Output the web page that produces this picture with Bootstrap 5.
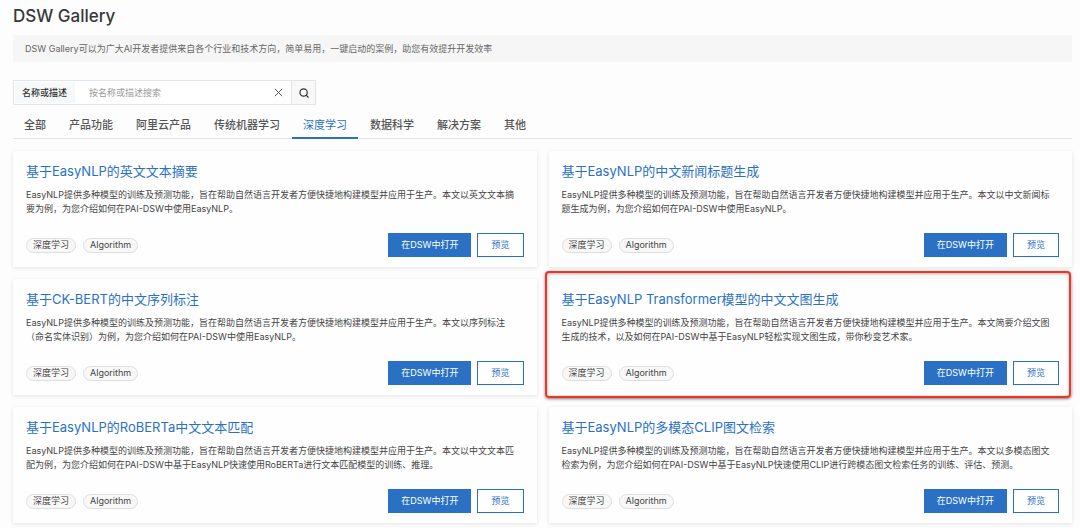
<!DOCTYPE html>
<html lang="zh-CN">
<head>
<meta charset="utf-8">
<meta name="viewport" content="width=device-width, initial-scale=1">
<title>DSW Gallery</title>
<link href="https://cdn.jsdelivr.net/npm/bootstrap@5.3.0/dist/css/bootstrap.min.css" rel="stylesheet">
<style>
  :root { --dsw-blue: #2a71c6; --dsw-line: #e3e4e6; }
  body { font-family: Inter, "Noto Sans CJK SC", sans-serif; font-size: 9px; line-height: 14px; color: #444; background: #fdfdfd; }
  .page { padding: 5px 8px 5px 13px; }
  .page-title { font-size: 17px; line-height: 22px; font-weight: 500; color: #383838; margin: 0 0 8px; }
  .intro { background: #f6f6f6; color: #666; padding: 7px 12px 6px; margin: 0 0 18px; }
  .search-box { width: 303px; height: 25px; border: 1px solid var(--dsw-line); background: #fff; }
  .search-box label { background: #f7f8fa; color: #333; font-weight: 500; padding: 0 8px 0 7px; margin: 1px; }
  .search-box input { font-size: 9px; line-height: 14px; padding: 0 13px; border: 0; background: transparent; border-radius: 0; min-height: 0; }
  .search-box input::placeholder { color: #999; }
  .search-box .tool { border: 0; background: transparent; padding: 0; width: 26px; color: #555; }
  .search-box .find { width: 24px; border-left: 1px solid var(--dsw-line); background: #f8f8f8; color: #333; }
  .topics { gap: 1px; margin: 5px 0 12px; border-bottom: 1px solid var(--dsw-line); }
  .topics .nav-link { font-size: 11px; line-height: 16px; font-weight: 500; color: #555; padding: 7px 11px 4px; border-bottom: 2px solid transparent; margin-bottom: -1px; }
  .topics .nav-link.active { color: var(--dsw-blue); font-weight: 400; border-color: var(--dsw-blue); }
  .gallery { --bs-gutter-x: 12px; --bs-gutter-y: 12px; }
  .case { border: 0; border-radius: 0; background: #fefefe; padding: 11px 13px 10px; box-shadow: 0 1px 4px rgba(0,0,0,.11); color: #444; }
  .case h2 { font-size: 13px; line-height: 18px; font-weight: 400; margin: 0 0 8px; }
  .case h2 a { color: var(--dsw-blue); text-decoration: none; }
  .case p { margin: 0 0 17px; padding-right: 8px; }
  .tags { gap: 7px; }
  .tag { border: 1px solid #dedede; background: #f8f8f8; border-radius: 8px; line-height: 12px; padding: 0 6px 1px; }
  .actions { gap: 6px; }
  .actions .btn { font-size: 9px; line-height: 14px; padding: 4px 13px; border-radius: 0; border-color: var(--dsw-blue); color: var(--dsw-blue); background: #fff; }
  .actions .open { background: var(--dsw-blue); color: #fff; padding: 4px 12px; }
  .picked::after { content: ""; position: absolute; top: -8px; right: 1px; bottom: -3px; left: -4px; border: 2px solid #ee3526; border-radius: 4px; box-shadow: 0 1px 3px rgba(0,0,0,.5), inset 0 1px 3px rgba(0,0,0,.3); pointer-events: none; }
</style>
</head>
<body>
<main class="page">
  <h1 class="page-title">DSW Gallery</h1>
  <p class="intro">DSW Gallery可以为广大AI开发者提供来自各个行业和技术方向，简单易用，一键启动的案例，助您有效提升开发效率</p>

  <form class="search-box d-flex align-items-stretch" role="search">
    <label for="q" class="d-flex align-items-center flex-shrink-0">名称或描述</label>
    <input id="q" class="form-control shadow-none" type="text" placeholder="按名称或描述搜索">
    <button type="button" class="tool flex-shrink-0 d-flex align-items-center justify-content-center" aria-label="清除">
      <svg width="9" height="9" viewBox="0 0 9 9" fill="none" stroke="currentColor"><path d="M.8.8l7.4 7.4M8.200.8L.8 8.200"/></svg>
    </button>
    <button type="submit" class="tool find flex-shrink-0 d-flex align-items-center justify-content-center" aria-label="搜索">
      <svg width="10" height="10" viewBox="0 0 10 10" fill="none" stroke="currentColor" stroke-width="1.200"><circle cx="4.600" cy="4.500" r="3.700"/><path d="M7.200 7.200L9.500 9.500"/></svg>
    </button>
  </form>

  <nav class="nav topics" aria-label="分类">
    <a class="nav-link" href="#">全部</a>
    <a class="nav-link" href="#">产品功能</a>
    <a class="nav-link" href="#">阿里云产品</a>
    <a class="nav-link" href="#">传统机器学习</a>
    <a class="nav-link active" aria-current="page" href="#">深度学习</a>
    <a class="nav-link" href="#">数据科学</a>
    <a class="nav-link" href="#">解决方案</a>
    <a class="nav-link" href="#">其他</a>
  </nav>

  <div class="row row-cols-2 gallery">
    <div class="col"><article class="card case h-100">
      <h2><a href="#">基于EasyNLP的英文文本摘要</a></h2>
      <p>EasyNLP提供多种模型的训练及预测功能，旨在帮助自然语言开发者方便快捷地构建模型并应用于生产。本文以英文文本摘要为例，为您介绍如何在PAI-DSW中使用EasyNLP。</p>
      <div class="d-flex justify-content-between align-items-center mt-auto">
        <div class="d-flex tags"><span class="tag">深度学习</span><span class="tag">Algorithm</span></div>
        <div class="d-flex actions"><button type="button" class="btn open">在DSW中打开</button><button type="button" class="btn">预览</button></div>
      </div>
    </article></div>
    <div class="col"><article class="card case h-100">
      <h2><a href="#">基于EasyNLP的中文新闻标题生成</a></h2>
      <p>EasyNLP提供多种模型的训练及预测功能，旨在帮助自然语言开发者方便快捷地构建模型并应用于生产。本文以中文新闻标题生成为例，为您介绍如何在PAI-DSW中使用EasyNLP。</p>
      <div class="d-flex justify-content-between align-items-center mt-auto">
        <div class="d-flex tags"><span class="tag">深度学习</span><span class="tag">Algorithm</span></div>
        <div class="d-flex actions"><button type="button" class="btn open">在DSW中打开</button><button type="button" class="btn">预览</button></div>
      </div>
    </article></div>
    <div class="col"><article class="card case h-100">
      <h2><a href="#">基于CK-BERT的中文序列标注</a></h2>
      <p>EasyNLP提供多种模型的训练及预测功能，旨在帮助自然语言开发者方便快捷地构建模型并应用于生产。本文以序列标注（命名实体识别）为例，为您介绍如何在PAI-DSW中使用EasyNLP。</p>
      <div class="d-flex justify-content-between align-items-center mt-auto">
        <div class="d-flex tags"><span class="tag">深度学习</span><span class="tag">Algorithm</span></div>
        <div class="d-flex actions"><button type="button" class="btn open">在DSW中打开</button><button type="button" class="btn">预览</button></div>
      </div>
    </article></div>
    <div class="col"><article class="card case picked h-100">
      <h2><a href="#">基于EasyNLP Transformer模型的中文文图生成</a></h2>
      <p>EasyNLP提供多种模型的训练及预测功能，旨在帮助自然语言开发者方便快捷地构建模型并应用于生产。本文简要介绍文图生成的技术，以及如何在PAI-DSW中基于EasyNLP轻松实现文图生成，带你秒变艺术家。</p>
      <div class="d-flex justify-content-between align-items-center mt-auto">
        <div class="d-flex tags"><span class="tag">深度学习</span><span class="tag">Algorithm</span></div>
        <div class="d-flex actions"><button type="button" class="btn open">在DSW中打开</button><button type="button" class="btn">预览</button></div>
      </div>
    </article></div>
    <div class="col"><article class="card case h-100">
      <h2><a href="#">基于EasyNLP的RoBERTa中文文本匹配</a></h2>
      <p>EasyNLP提供多种模型的训练及预测功能，旨在帮助自然语言开发者方便快捷地构建模型并应用于生产。本文以中文文本匹配为例，为您介绍如何在PAI-DSW中基于EasyNLP快速使用RoBERTa进行文本匹配模型的训练、推理。</p>
      <div class="d-flex justify-content-between align-items-center mt-auto">
        <div class="d-flex tags"><span class="tag">深度学习</span><span class="tag">Algorithm</span></div>
        <div class="d-flex actions"><button type="button" class="btn open">在DSW中打开</button><button type="button" class="btn">预览</button></div>
      </div>
    </article></div>
    <div class="col"><article class="card case h-100">
      <h2><a href="#">基于EasyNLP的多模态CLIP图文检索</a></h2>
      <p>EasyNLP提供多种模型的训练及预测功能，旨在帮助自然语言开发者方便快捷地构建模型并应用于生产。本文以多模态图文检索为例，为您介绍如何在PAI-DSW中基于EasyNLP快速使用CLIP进行跨模态图文检索任务的训练、评估、预测。</p>
      <div class="d-flex justify-content-between align-items-center mt-auto">
        <div class="d-flex tags"><span class="tag">深度学习</span><span class="tag">Algorithm</span></div>
        <div class="d-flex actions"><button type="button" class="btn open">在DSW中打开</button><button type="button" class="btn">预览</button></div>
      </div>
    </article></div>
  </div>
</main>
<script src="https://cdn.jsdelivr.net/npm/bootstrap@5.3.0/dist/js/bootstrap.bundle.min.js"></script>
</body>
</html>
